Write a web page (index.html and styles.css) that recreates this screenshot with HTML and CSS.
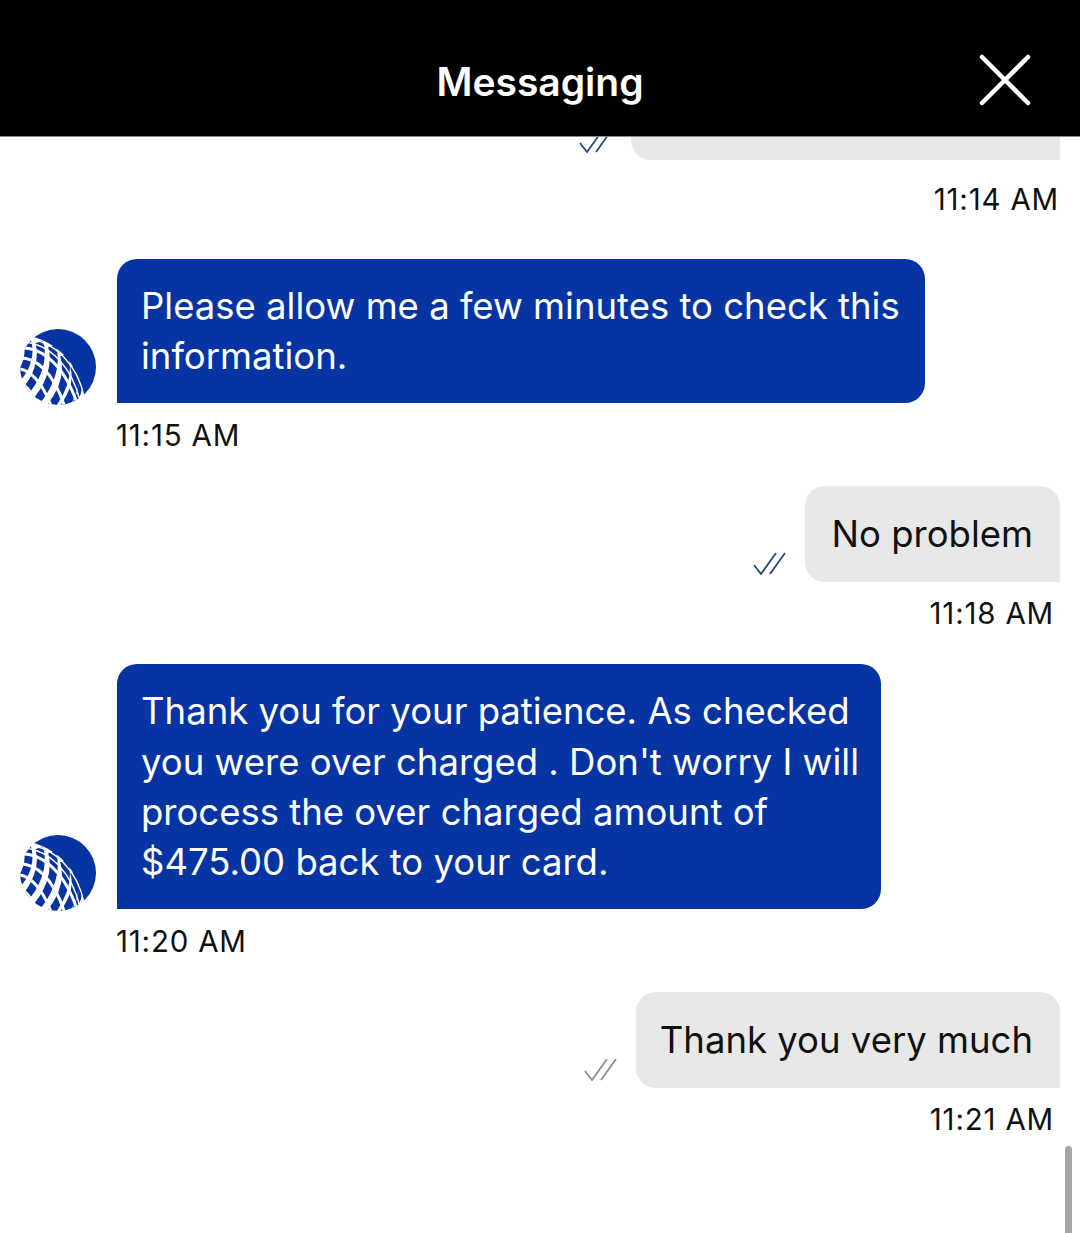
FILE: index.html
```html
<!DOCTYPE html>
<html lang="en">
<head>
  <meta charset="UTF-8">
  <meta name="viewport" content="width=device-width, initial-scale=1.0">
  <title>Messaging</title>
  <link rel="stylesheet" href="styles.css">
</head>
<body>
  <svg class="defs" width="0" height="0" aria-hidden="true">
    <symbol id="check" viewBox="0 0 33 23">
      <path d="M1 13 8 22 23 1M17 22 32 1" fill="none" stroke="currentColor" stroke-width="1.8"/>
    </symbol>
    <symbol id="globe" viewBox="0 0 76 76">
      <clipPath id="disc"><circle cx="38" cy="38" r="38"/></clipPath>
      <g clip-path="url(#disc)">
        <rect width="76" height="76" fill="#fff"/>
        <path d="M10 7C22 -6 50 -6 66 10C84 28 80 56 64 70C62 40 40 14 10 7Z" fill="#0634a3"/>
        <g fill="none" stroke="#0634a3" stroke-width="8">
          <path d="M7 12C11 24 7 40 -4 50"/>
          <path d="M19 13C25 30 16 52 2 66"/>
          <path d="M32 17C38 38 28 60 13 76"/>
          <path d="M44 26C50 46 41 66 27 82"/>
          <path d="M54 37C59 52 52 68 41 82"/>
        </g>
        <path d="M60 50C62 58 58 68 53 76" fill="none" stroke="#0634a3" stroke-width="4"/>
        <g fill="none" stroke="#fff" stroke-width="3">
          <path d="M-2 19C18 17 42 31 57 74"/>
          <path d="M-4 29C14 27 34 41 46 82"/>
          <path d="M-6 40C8 38 24 52 34 86"/>
          <path d="M-8 52C2 50 14 62 21 88"/>
        </g>
        <g fill="none" stroke="#fff" stroke-width="1.4">
          <path d="M8 10C34 12 58 36 64 68"/>
          <path d="M4 13C30 15 52 38 60 72"/>
        </g>
      </g>
    </symbol>
  </svg>

  <header class="topbar">
    <h1 class="topbar-title">Messaging</h1>
    <button class="close-btn" aria-label="Close">
      <svg width="52" height="52" viewBox="0 0 52 52"><path d="M3 3 49 49M49 3 3 49" stroke="#fff" stroke-width="4.5" stroke-linecap="round"/></svg>
    </button>
  </header>

  <main class="chat">
    <div class="row row-out">
      <svg class="tick tick-blue tick-cut"><use href="#check"/></svg>
      <div class="bubble bubble-out bubble-cut"></div>
    </div>
    <div class="time time-out time-first">11:14 AM</div>

    <div class="row row-in gap-lg">
      <svg class="avatar"><use href="#globe"/></svg>
      <div class="bubble bubble-in">Please allow me a few minutes to check this<br>information.</div>
    </div>
    <div class="time time-in">11:15 AM</div>

    <div class="row row-out gap-md">
      <svg class="tick tick-blue"><use href="#check"/></svg>
      <div class="bubble bubble-out">No problem</div>
    </div>
    <div class="time time-out">11:18 AM</div>

    <div class="row row-in gap-md">
      <svg class="avatar"><use href="#globe"/></svg>
      <div class="bubble bubble-in bubble-tight">Thank you for your patience. As checked<br>you were over charged . Don't worry I will<br>process the over charged amount of<br>$475.00 back to your card.</div>
    </div>
    <div class="time time-in">11:20 AM</div>

    <div class="row row-out gap-md">
      <svg class="tick tick-grey"><use href="#check"/></svg>
      <div class="bubble bubble-out bubble-short">Thank you very much</div>
    </div>
    <div class="time time-out">11:21 AM</div>
  </main>

  <div class="scroll-thumb"></div>
</body>
</html>
```

FILE: styles.css
```css
* {
  box-sizing: border-box;
}
html,
body {
  margin: 0;
  height: 100%;
}
body {
  position: relative;
  height: 1233px;
  overflow: hidden;
  background: #fff;
  color: #111;
  font-family: Inter, "Liberation Sans", sans-serif;
}
.defs {
  position: absolute;
}

.topbar {
  position: relative;
  height: 137px;
  background: #000;
  border-bottom: 1px solid #8a8a8a;
  display: flex;
  align-items: center;
  justify-content: center;
}
.topbar-title {
  margin: 0;
  padding-top: 26px;
  color: #fff;
  font-size: 39px;
  font-weight: 600;
}
.close-btn {
  position: absolute;
  top: 54px;
  right: 49px;
  width: 52px;
  height: 52px;
  padding: 0;
  border: 0;
  background: none;
}
.close-btn svg {
  display: block;
}

.row {
  display: flex;
  align-items: flex-end;
}
.row-out {
  justify-content: flex-end;
  padding-right: 20px;
}
.row-in {
  padding-left: 20px;
}
.gap-lg {
  margin-top: 42px;
}
.gap-md {
  margin-top: 33px;
}

.bubble {
  font-size: 36.5px;
  line-height: 50.4px;
  padding: 22px 25px 21px 24px;
  border-radius: 20px;
}
.bubble-in {
  margin-left: 21px;
  background: #0634a3;
  color: #fff;
  border-bottom-left-radius: 0;
}
.bubble-tight {
  padding-right: 22px;
}
.bubble-out {
  padding: 23.5px 27px 22.5px 26.5px;
  background: #e8e8e8;
  border-bottom-right-radius: 0;
}
.bubble-short {
  padding-left: 24px;
}
.bubble-cut {
  width: 429px;
  height: 23px;
  padding: 0;
  border-top-left-radius: 0;
  border-top-right-radius: 0;
}

.avatar {
  width: 76px;
  height: 76px;
  margin-bottom: -2px;
  flex: none;
}
.tick {
  width: 33px;
  height: 23px;
  margin: 0 19px 7px 0;
  flex: none;
}
.tick-blue {
  color: #27467f;
}
.tick-grey {
  color: #8d8d8d;
}
.tick-cut {
  margin-top: -7px;
}

.time {
  font-size: 29.5px;
  line-height: 36px;
  letter-spacing: 0.8px;
  margin-top: 13px;
}
.time-in {
  margin-top: 14px;
  padding-left: 116px;
}
.time-out {
  text-align: right;
  padding-right: 26px;
}
.time-first {
  margin-top: 21px;
  padding-right: 21px;
}

.scroll-thumb {
  position: absolute;
  top: 1146px;
  left: 1065px;
  width: 7px;
  height: 87px;
  border-radius: 4px 4px 0 0;
  background: #a6a6a6;
}
```
